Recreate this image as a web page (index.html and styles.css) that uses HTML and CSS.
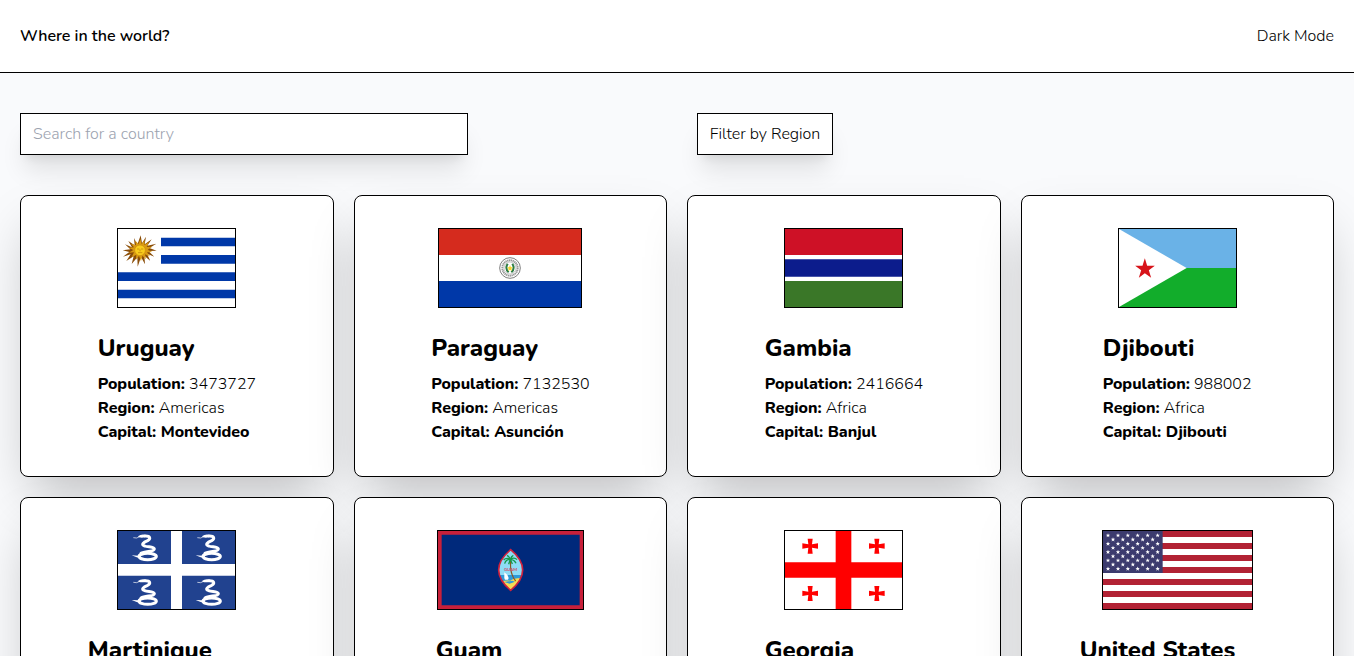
FILE: index.html
```html
<!DOCTYPE html>
<html lang="en">
<head>
<meta charset="utf-8">
<title>Where in the world?</title>
<link rel="stylesheet" href="styles.css">
</head>
<body>
<header class="header">
  <h1 class="brand">Where in the world?</h1>
  <button class="mode">Dark Mode</button>
</header>
<main class="main">
  <div class="controls">
    <input class="search" type="text" placeholder="Search for a country">
    <div><button class="filter">Filter by Region</button></div>
  </div>
  <section class="grid">
    <article class="card">
      <svg class="flag" viewBox="54 42 351 234" preserveAspectRatio="none">
        <path fill="#fff" d="M54 42h351v234H54z"/>
        <path fill="#0038a8" d="M183 68h222v26H183zM183 120h222v26H183zM54 172h351v26H54zM54 224h351v26H54z"/>
        <g transform="translate(2 2)">
          <path fill="#8a4d08" d="M120 59l4 24 12-20-4 23 21-15-13 19 27-6-21 13 22 8-25 1 18 17-22-9 10 22-18-16 2 26-12-22-10 29-1-28-17 20 6-23-22 14 13-20-23 7 19-14-20-5 23-3-16-15 21 9-11-19 19 13-2-22 10 20z"/>
          <path fill="#d99a12" d="M119 70l4 15 9-12-1 15 14-8-7 14 17-1-14 9 14 7-16 1 9 12-15-6 3 15-11-11-4 17-6-17-9 12 1-15-14 8 7-15-16 1 14-8-14-7 16-1-9-11 15 5-2-14 10 10z"/>
          <circle cx="118" cy="104" r="16" fill="#f8cc1c" stroke="#c98a10" stroke-width="2"/>
          <path fill="none" stroke="#b87a0a" stroke-width="2" d="M109 100h7M121 100h7M112 111h13M118 101v6"/>
        </g>
      </svg>
      <div class="info info-a">
        <h2 class="name">Uruguay</h2>
        <p><b>Population:</b> 3473727</p>
        <p><b>Region:</b> Americas</p>
        <p class="cap">Capital: Montevideo</p>
      </div>
    </article>
    <article class="card">
      <svg class="flag w-paraguay" viewBox="27 42 426 234" preserveAspectRatio="none">
        <path fill="#fff" d="M27 42h426v234H27z"/>
        <path fill="#d52b1e" d="M27 42h426v78H27z"/>
        <path fill="#0038a8" d="M27 198h426v78H27z"/>
        <circle cx="240" cy="159" r="31" fill="#fff" stroke="#666" stroke-width="2.5"/>
        <circle cx="240" cy="159" r="23" fill="none" stroke="#999" stroke-width="6" stroke-dasharray="4 1.5"/>
        <circle cx="240" cy="159" r="18" fill="#fff" stroke="#999" stroke-width="1.5"/>
        <path fill="none" stroke="#2d7d46" stroke-width="6" d="M233 146q-9 15 3 26M247 146q9 15-3 26"/>
        <path fill="#f5d328" d="M240 150l2.500 7h6.500l-5 4.500 2 6.500-6-4-6 4 2-6.500-5-4.500h6.500z"/>
      </svg>
      <div class="info info-a">
        <h2 class="name">Paraguay</h2>
        <p><b>Population:</b> 7132530</p>
        <p><b>Region:</b> Americas</p>
        <p class="cap">Capital: Asunción</p>
      </div>
    </article>
    <article class="card">
      <svg class="flag" viewBox="30 42 351 234" preserveAspectRatio="none">
        <path fill="#fff" d="M30 42h351v234H30z"/>
        <path fill="#ce1126" d="M30 42h351v78H30z"/>
        <path fill="#0c1c8c" d="M30 133h351v52H30z"/>
        <path fill="#3a7728" d="M30 198h351v78H30z"/>
      </svg>
      <div class="info info-a">
        <h2 class="name">Gambia</h2>
        <p><b>Population:</b> 2416664</p>
        <p><b>Region:</b> Africa</p>
        <p class="cap">Capital: Banjul</p>
      </div>
    </article>
    <article class="card">
      <svg class="flag" viewBox="42 42 351 234" preserveAspectRatio="none">
        <path fill="#6ab2e7" d="M42 42h351v117H42z"/>
        <path fill="#12ad2b" d="M42 159h351v117H42z"/>
        <path fill="#fff" d="M42 42l203 117L42 276z"/>
        <path fill="#d7141a" d="M119.500 130l7 22h23l-18 14 7 22-19-13-18 13 7-22-18-14h22z"/>
      </svg>
      <div class="info info-b">
        <h2 class="name">Djibouti</h2>
        <p><b>Population:</b> 988002</p>
        <p><b>Region:</b> Africa</p>
        <p class="cap">Capital: Djibouti</p>
      </div>
    </article>
    <article class="card">
      <svg class="flag" viewBox="54 33 351 234" preserveAspectRatio="none">
        <defs>
          <g id="snake">
            <path fill="none" stroke="#fff" stroke-width="2" d="M100 53l10 1 9-4"/>
            <path fill="#fff" d="M114 49q10-8 24-4l-3 7q-10 2-18 0z"/>
            <path fill="none" stroke="#fff" stroke-width="9" stroke-linecap="round" d="M134 48c17-1 19 8 9 14-12 5-22 12-9 16 9 4 28 1 29 9 0 9-28 5-40 13"/>
            <ellipse cx="143" cy="109.500" rx="26" ry="9.500" fill="none" stroke="#fff" stroke-width="9"/>
            <path fill="#fff" d="M95 106l20 1 4-6 5 14-14-3z"/>
          </g>
        </defs>
        <path fill="#fff" d="M54 33h351v234H54z"/>
        <path fill="#21428f" d="M54 33h159v99H54zM246 33h159v99H246zM54 167h159v100H54zM246 167h159v100H246z"/>
        <use href="#snake"/>
        <use href="#snake" x="192"/>
        <use href="#snake" y="134"/>
        <use href="#snake" x="192" y="134"/>
      </svg>
      <div class="info info-c">
        <h2 class="name">Martinique</h2>
        <p><b>Population:</b> 378243</p>
        <p><b>Region:</b> Americas</p>
        <p class="cap">Capital: Fort-de-France</p>
      </div>
    </article>
    <article class="card">
      <svg class="flag w-guam" viewBox="39 33 435 234" preserveAspectRatio="none">
        <path fill="#c8203a" d="M39 33h435v234H39z"/>
        <path fill="#00297b" d="M50 44h414v212H50z"/>
        <clipPath id="seal"><path d="M257 89q36 30 36 61t-36 61q-36-30-36-61t36-61z"/></clipPath>
        <g clip-path="url(#seal)">
          <path fill="#8edcf5" d="M218 86h78v80h-78z"/>
          <path fill="#2f9ad8" d="M218 165h78v22h-78z"/>
          <path fill="#f5dc54" d="M218 187q20-8 38-5 10-9 38-8v38h-76z"/>
          <path fill="#2f9ad8" d="M238 186l24-4 8 3-16 6z"/>
          <path fill="#fff" d="M238 174v-17q11 7 13 17l-2 5h-9z"/>
        </g>
        <path fill="none" stroke="#8b5523" stroke-width="3.500" d="M257 118q-2 30 4 45 4 12 11 20"/>
        <path fill="none" stroke="#16994b" stroke-width="4" d="M256 118q-12-7-20 2M256 118q12-8 20 1M256 118q-14 0-17 13M256 118q12 1 17 12M256 118q-4-9-10-12M256 118q3-10 9-12M256 118l-5 15M256 118l6 14"/>
        <text class="seal-text" x="257" y="154" text-anchor="middle">GUAM</text>
        <path fill="none" stroke="#d0213c" stroke-width="5" d="M257 89q36 30 36 61t-36 61q-36-30-36-61t36-61z"/>
      </svg>
      <div class="info info-b">
        <h2 class="name">Guam</h2>
        <p><b>Population:</b> 168783</p>
        <p><b>Region:</b> Oceania</p>
        <p class="cap">Capital: Hagåtña</p>
      </div>
    </article>
    <article class="card">
      <svg class="flag" viewBox="30 33 351 234" preserveAspectRatio="none">
        <defs><path id="cross" fill="#f00" d="M98 56h15l-2 17 18-3v16l-18-3 2 18H98l2-18-18 3V70l18 3z"/></defs>
        <path fill="#fff" d="M30 33h351v234H30z"/>
        <path fill="#f00" d="M182 33h47v94h152v46H229v94h-47v-94H30v-46h152z"/>
        <use href="#cross"/>
        <use href="#cross" x="200"/>
        <use href="#cross" y="142"/>
        <use href="#cross" x="200" y="142"/>
      </svg>
      <div class="info info-a">
        <h2 class="name">Georgia</h2>
        <p><b>Population:</b> 3714000</p>
        <p><b>Region:</b> Asia</p>
        <p class="cap">Capital: Tbilisi</p>
      </div>
    </article>
    <article class="card">
      <svg class="flag w-usa" viewBox="99 33 447 234" preserveAspectRatio="none">
        <defs>
          <path id="star" fill="#fff" d="M0-6.500l1.700 4.500H6.500L2.800 1l1.400 5L0 3.100l-4.200 2.900L-2.800 1l-3.700-3h4.800z"/>
          <g id="six"><use href="#star" x="114"/><use href="#star" x="144"/><use href="#star" x="173.500"/><use href="#star" x="203"/><use href="#star" x="233"/><use href="#star" x="263"/></g>
          <g id="five"><use href="#star" x="129"/><use href="#star" x="158.500"/><use href="#star" x="188.500"/><use href="#star" x="218"/><use href="#star" x="248"/></g>
        </defs>
        <path fill="#fff" d="M99 33h447v234H99z"/>
        <path fill="#b22234" d="M99 33h447v18H99zM99 69h447v18H99zM99 105h447v18H99zM99 141h447v18H99zM99 177h447v18H99zM99 213h447v18H99zM99 249h447v18H99z"/>
        <path fill="#3c3b6e" d="M99 33h179v126H99z"/>
        <use href="#six" y="46"/><use href="#five" y="58.500"/><use href="#six" y="71"/><use href="#five" y="83.500"/><use href="#six" y="96"/><use href="#five" y="108.500"/><use href="#six" y="121"/><use href="#five" y="133.500"/><use href="#six" y="146"/>
      </svg>
      <div class="info info-d">
        <h2 class="name">United States</h2>
        <p><b>Population:</b> 329484123</p>
        <p><b>Region:</b> Americas</p>
        <p class="cap">Capital: Washington, D.C.</p>
      </div>
    </article>
  </section>
</main>
</body>
</html>
```
FILE: styles.css
```css
*, *::before, *::after { box-sizing: border-box; }
body {
  margin: 0;
  height: 100vh;
  overflow: hidden;
  background: #f9fafc;
  color: #000;
  font: 300 16px/24px Nunito, Lato, "Open Sans", sans-serif;
}
h1, h2, p { margin: 0; }
button, input { font: inherit; color: inherit; border-radius: 0; }
.header {
  display: flex;
  justify-content: space-between;
  align-items: center;
  height: 73px;
  padding: 0 20px;
  background: #fff;
  border-bottom: 1px solid #000;
}
.brand { font-size: 16px; font-weight: 600; letter-spacing: -.03px; }
.mode { padding: 0; border: 0; background: none; }
.main { padding: 40px 20px; }
.controls {
  display: grid;
  grid-template-columns: 1fr 1fr;
  gap: 40px;
  margin-bottom: 40px;
}
.search, .filter {
  height: 42px;
  padding: 8px 12px;
  border: 1px solid #000;
  background: #fff;
  box-shadow: 0 20px 25px -5px rgba(0, 0, 0, .1), 0 8px 10px -6px rgba(0, 0, 0, .1);
}
.search { width: 100%; max-width: 448px; }
.search::placeholder { color: #9ca3af; opacity: 1; }
.filter { display: block; width: 136px; padding: 8px 0; white-space: nowrap; }
.grid { display: grid; grid-template-columns: repeat(4, 1fr); gap: 20px; }
.card {
  display: flex;
  flex-direction: column;
  align-items: center;
  height: 282px;
  padding: 32px 0;
  background: #fff;
  border: 1px solid #000;
  border-radius: 8px;
  box-shadow: 0 25px 50px -12px rgba(0, 0, 0, .25);
}
.flag { flex: none; width: 119px; height: 80px; margin-bottom: 24px; border: 1px solid #000; }
.w-paraguay { width: 144px; }
.w-guam { width: 147px; }
.w-usa { width: 151px; }
.seal-text { font: 700 13px Lato, sans-serif; fill: #d0506a; }
.info { white-space: nowrap; }
.info-a { width: 158px; }
.info-b { width: 149px; }
.info-c { width: 178px; }
.info-d { width: 195px; }
.name { margin-bottom: 8px; font-size: 24px; line-height: 32px; font-weight: 800; }
b, .cap { font-weight: 800; }
```
